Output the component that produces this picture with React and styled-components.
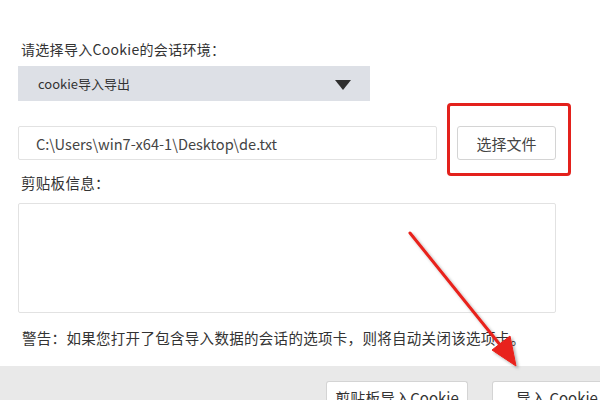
import styled, { createGlobalStyle } from "styled-components";

const GlobalStyle = createGlobalStyle`
  html, body {
    margin: 0;
    padding: 0;
    background: #ffffff;
  }
  body {
    font-family: "Noto Sans CJK SC", "Noto Sans", sans-serif;
    color: #333333;
  }
`;

const Page = styled.div`
  position: relative;
  width: 600px;
  height: 400px;
  overflow: hidden;
  display: flex;
  flex-direction: column;
`;

const Content = styled.div`
  display: flex;
  flex-direction: column;
  padding: 0 0 0 18px;
  width: 538px;
`;

const Label = styled.div`
  font-size: ${(p) => p.$size || 14}px;
  line-height: 20px;
  margin-top: ${(p) => p.$top}px;
  padding-left: 3px;
  color: #333;
  letter-spacing: 0.3px;
`;

const Select = styled.div`
  margin-top: 7px;
  width: 352px;
  height: 35px;
  background: #dde0e6;
  display: flex;
  align-items: center;
  justify-content: space-between;
  padding: 0 19px 0 20px;
  box-sizing: border-box;
  font-size: 13px;
  color: #333;
`;

const Caret = styled.span`
  width: 0;
  height: 0;
  border-left: 8px solid transparent;
  border-right: 8px solid transparent;
  border-top: 10px solid #2f2f2f;
  margin-top: 2px;
`;

const FileRow = styled.div`
  margin-top: 25px;
  display: flex;
  align-items: center;
  gap: 20px;
  height: 34px;
`;

const PathInput = styled.div`
  width: 419px;
  height: 34px;
  box-sizing: border-box;
  border: 1px solid #e2e2e2;
  border-radius: 2px;
  display: flex;
  align-items: center;
  padding-left: 17px;
  font-size: 14.6px;
  color: #444;
`;

const ButtonWrap = styled.div`
  position: relative;
`;

const Button = styled.div`
  flex-shrink: 0;
  height: 34px;
  width: ${(p) => p.$w}px;
  box-sizing: border-box;
  border: 1px solid #d4d4d4;
  border-radius: 3px;
  background: #ffffff;
  display: flex;
  align-items: center;
  justify-content: center;
  font-size: 15px;
  color: #444;
  white-space: nowrap;
`;

const Highlight = styled.div`
  position: absolute;
  left: -10px;
  top: -23px;
  width: 124px;
  height: 73px;
  box-sizing: border-box;
  border: 3px solid #e3211c;
  border-radius: 4px;
`;

const TextArea = styled.div`
  margin-top: 10px;
  width: 538px;
  height: 110px;
  box-sizing: border-box;
  border: 1px solid #e2e2e2;
  border-radius: 2px;
`;

const Warning = styled.div`
  margin-top: 15px;
  padding-left: 4px;
  font-size: 14.5px;
  letter-spacing: 0.3px;
  line-height: 20px;
  color: #333;
  white-space: nowrap;
`;

const Footer = styled.div`
  margin-top: 18px;
  flex: 1;
  background: #e9e9e9;
  display: flex;
  align-items: flex-start;
  padding: 15px 0 0 326px;
  gap: 24px;
`;

const FooterButton = styled(Button)`
  border-radius: 3px 3px 0 0;
  border-bottom: none;
  height: 30px;
  align-items: flex-start;
  padding-top: 5px;
  font-size: 15px;
  color: #333;
`;

const Arrow = styled.svg`
  position: absolute;
  left: 0;
  top: 0;
  pointer-events: none;
`;

export default function App() {
  return (
    <Page>
      <GlobalStyle />
      <Content>
        <Label $top={39}>请选择导入Cookie的会话环境：</Label>
        <Select>
          <span>cookie导入导出</span>
          <Caret />
        </Select>
        <FileRow>
          <PathInput>C:\Users\win7-x64-1\Desktop\de.txt</PathInput>
          <ButtonWrap>
            <Button $w={99}>选择文件</Button>
            <Highlight />
          </ButtonWrap>
        </FileRow>
        <Label $top={13} $size={14.5}>剪贴板信息：</Label>
        <TextArea />
        <Warning>警告：如果您打开了包含导入数据的会话的选项卡，则将自动关闭该选项卡。</Warning>
      </Content>
      <Footer>
        <FooterButton $w={142}>剪贴板导入Cookie</FooterButton>
        <FooterButton $w={130}>导入 Cookie</FooterButton>
      </Footer>
      <Arrow width="600" height="400" viewBox="0 0 600 400">
        <defs>
          <filter id="sh" x="-20%" y="-20%" width="140%" height="140%">
            <feDropShadow dx="2" dy="2" stdDeviation="1.5" floodColor="#000" floodOpacity="0.3" />
          </filter>
        </defs>
        <g filter="url(#sh)" fill="#e8211b" stroke="#e8211b">
          <line x1="410" y1="233" x2="505" y2="351" strokeWidth="3" strokeLinecap="round" />
          <polygon points="516,366 492,350 510,336" strokeWidth="1" strokeLinejoin="round" />
        </g>
      </Arrow>
    </Page>
  );
}
